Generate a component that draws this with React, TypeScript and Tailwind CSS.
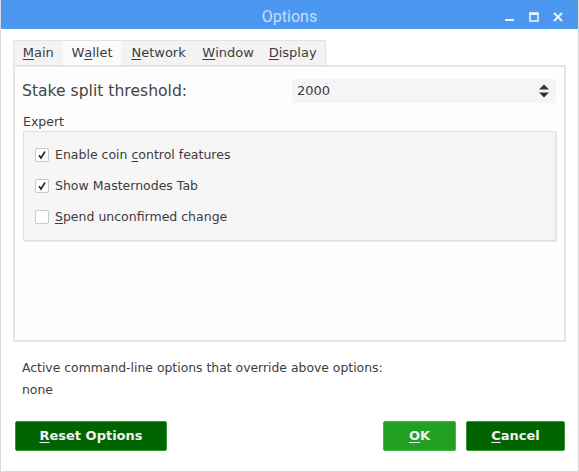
import React from "react";

const font = { fontFamily: '"DejaVu Sans", sans-serif' };

function U({ children }: { children: React.ReactNode }) {
  return <span className="underline underline-offset-2">{children}</span>;
}

function Check({ checked }: { checked: boolean }) {
  return (
    <span className="flex h-[14px] w-[14px] shrink-0 items-center justify-center rounded-[2px] border border-[#c9c9c9] bg-white">
      {checked && (
        <svg width="10" height="10" viewBox="0 0 10 10">
          <path d="M2 5.2 L4 8 L8 1.5" fill="none" stroke="#222" strokeWidth="1.6" />
        </svg>
      )}
    </span>
  );
}

const tabs = [
  { key: "main", label: <><U>M</U>ain</>, w: "w-[49px]" },
  { key: "wallet", label: <>W<U>a</U>llet</>, w: "w-[59px]" },
  { key: "network", label: <><U>N</U>etwork</>, w: "w-[75px]" },
  { key: "window", label: <><U>W</U>indow</>, w: "w-[65px]" },
  { key: "display", label: <><U>D</U>isplay</>, w: "w-[65px]" },
];

export default function App() {
  return (
    <div style={font} className="flex h-[472px] w-[579px] flex-col border-x border-b border-[#d9d9d9] bg-white text-[12.5px] text-[#3c3c3c]">
      <div className="relative flex h-[29px] shrink-0 items-center justify-center bg-[#4c98f0] pt-[4px]">
        <span style={{ fontFamily: "Roboto, sans-serif" }} className="text-[16px] text-[#c8defa]">
          Options
        </span>
        <div className="absolute right-[14px] top-[2px] flex h-full items-center gap-[12px]">
          <svg width="12" height="12" viewBox="0 0 12 12">
            <rect x="1" y="8" width="9" height="2" fill="#eaf2fd" />
          </svg>
          <svg width="12" height="12" viewBox="0 0 12 12">
            <rect x="2" y="2" width="8" height="8" fill="none" stroke="#eaf2fd" strokeWidth="1.6" />
            <rect x="2" y="2" width="8" height="2" fill="#eaf2fd" />
          </svg>
          <svg width="12" height="12" viewBox="0 0 12 12">
            <path d="M2 2 L10 10 M10 2 L2 10" stroke="#eaf2fd" strokeWidth="2" />
          </svg>
        </div>
      </div>

      <div className="flex flex-1 flex-col px-[12px] pt-[11px]">
        <div className="flex h-[25px] w-[313px] border border-b-0 border-[#e2e2e2] bg-[#f4f3f3] text-[13px]">
          {tabs.map((t) => (
            <div
              key={t.key}
              className={`flex ${t.w} items-center justify-center ${t.key === "wallet" ? "bg-[#fbfbfb]" : ""}`}
            >
              {t.label}
            </div>
          ))}
        </div>

        <div className="flex h-[277px] flex-col border-2 border-[#e6e6e6] bg-[#fdfdfd] px-[8px]">
          <div className="mt-[12px] flex h-[24px] items-center justify-between">
            <span className="-ml-[1px] pt-[2px] text-[15.6px] text-[#444]">Stake split threshold:</span>
            <div className="flex h-[24px] w-[264px] items-center justify-between bg-[#f5f5f5] pl-[5px] pr-[6px] text-[13px]">
              <span>2000</span>
              <svg width="12" height="16" viewBox="0 0 12 16">
                <path d="M1 6.5 L6 1.5 L11 6.5 Z M1 9.5 L6 14.5 L11 9.5 Z" fill="#333" />
              </svg>
            </div>
          </div>

          <div className="mt-[12px] leading-[14px]">Expert</div>
          <div className="mt-[2px] flex h-[110px] flex-col gap-[17px] border border-[#e0e0e0] bg-[#f6f6f6] pl-[11px] pt-[16px] shadow-[1px_1px_0_#e8e8e8]">
            <label className="flex items-center gap-[6px] leading-[14px]">
              <Check checked />
              <span>Enable coin <U>c</U>ontrol features</span>
            </label>
            <label className="flex items-center gap-[6px] leading-[14px]">
              <Check checked />
              <span>Show Masternodes Tab</span>
            </label>
            <label className="flex items-center gap-[6px] leading-[14px]">
              <Check checked={false} />
              <span><U>S</U>pend unconfirmed change</span>
            </label>
          </div>
        </div>

        <div className="mt-[17px] pl-[9px] text-[12.4px]">Active command-line options that override above options:</div>
        <div className="mt-[3px] pl-[9px] text-[12.4px]">none</div>

        <div className="mt-[22px] flex items-center text-[13px]">
          <button className="ml-[2px] h-[30px] w-[152px] rounded-[2px] border border-[#2e9a2e] bg-[#006500] font-bold text-[#f2f2f2]">
            <U>R</U>eset Options
          </button>
          <button className="ml-auto h-[30px] w-[73px] rounded-[2px] border border-[#44b444] bg-[#22a022] font-bold text-[#f2f2f2]">
            <U>O</U>K
          </button>
          <button className="ml-[10px] mr-[1px] h-[30px] w-[99px] rounded-[2px] border border-[#2e9a2e] bg-[#006500] font-bold text-[#f2f2f2]">
            <U>C</U>ancel
          </button>
        </div>
      </div>
    </div>
  );
}
